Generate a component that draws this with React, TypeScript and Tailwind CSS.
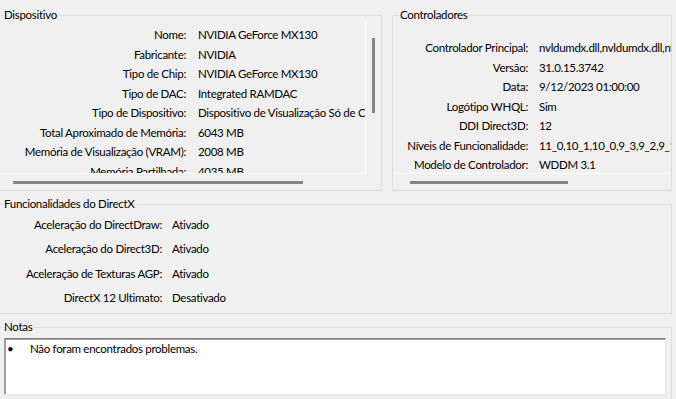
const dispositivo = [
  ['Nome:', 'NVIDIA GeForce MX130'],
  ['Fabricante:', 'NVIDIA'],
  ['Tipo de Chip:', 'NVIDIA GeForce MX130'],
  ['Tipo de DAC:', 'Integrated RAMDAC'],
  ['Tipo de Dispositivo:', 'Dispositivo de Visualização Só de Composição'],
  ['Total Aproximado de Memória:', '6043 MB'],
  ['Memória de Visualização (VRAM):', '2008 MB'],
  ['Memória Partilhada:', '4035 MB'],
]

const controladores = [
  ['Controlador Principal:', 'nvldumdx.dll,nvldumdx.dll,nvldumdx.dll,nvldumdx.dll'],
  ['Versão:', '31.0.15.3742'],
  ['Data:', '9/12/2023 01:00:00'],
  ['Logótipo WHQL:', 'Sim'],
  ['DDI Direct3D:', '12'],
  ['Níveis de Funcionalidade:', '11_0,10_1,10_0,9_3,9_2,9_1'],
  ['Modelo de Controlador:', 'WDDM 3.1'],
]

const funcionalidades = [
  ['Aceleração do DirectDraw:', 'Ativado'],
  ['Aceleração do Direct3D:', 'Ativado'],
  ['Aceleração de Texturas AGP:', 'Ativado'],
  ['DirectX 12 Ultimato:', 'Desativado'],
]

function Title({ text, className }: { text: string; className: string }) {
  return (
    <span
      className={`absolute -top-[9px] bg-[#f0f0f0] px-px leading-4 whitespace-nowrap ${className}`}
    >
      {text}
    </span>
  )
}

export default function App() {
  return (
    <div
      className="w-[676px] h-[399px] overflow-hidden bg-[#f0f0f0] text-[11.5px] tracking-[-0.3px] text-black"
      style={{ fontFamily: 'Lato, "Noto Sans", sans-serif' }}
    >
      <div className="flex pt-[15px]">
        {/* Dispositivo */}
        <div className="relative -ml-px w-[383px] h-[176px] border border-[#dcdcdc]">
          <Title text="Dispositivo" className="left-[3px]" />
          <div className="flex mt-[4px]">
            <div className="w-[366px] h-[154px] overflow-hidden border-r border-b border-white pt-[5px]">
              {dispositivo.map(([label, value]) => (
                <div key={label} className="flex items-center h-[19.5px] whitespace-nowrap">
                  <span className="w-[186px] shrink-0 text-right">{label}</span>
                  <span className="ml-[12px]">{value}</span>
                </div>
              ))}
            </div>
            <div className="ml-[6px] mt-[18px] w-[3px] h-[75px] bg-[#858585]" />
          </div>
          <div className="mt-[7px] ml-[13px] w-[290px] h-[3px] bg-[#858585]" />
        </div>

        {/* Controladores */}
        <div className="relative ml-[10px] w-[280px] h-[176px] border border-[#dcdcdc]">
          <Title text="Controladores" className="left-[6px]" />
          <div className="mt-[4px] h-[154px] overflow-hidden border-b border-white pt-[18px]">
            {controladores.map(([label, value]) => (
              <div key={label} className="flex items-center h-[19.5px] whitespace-nowrap">
                <span className="w-[135px] shrink-0 text-right">{label}</span>
                <span className="ml-[11px]">{value}</span>
              </div>
            ))}
          </div>
          <div className="mt-[7px] ml-[17px] w-[158px] h-[3px] bg-[#858585]" />
        </div>
      </div>

      {/* Funcionalidades do DirectX */}
      <div className="relative mt-[13px] -ml-px w-[673px] h-[110px] border border-[#dcdcdc] pt-[7px]">
        <Title text="Funcionalidades do DirectX" className="left-[3px]" />
        {funcionalidades.map(([label, value]) => (
          <div key={label} className="flex items-center h-[24.5px] whitespace-nowrap">
            <span className="w-[162px] shrink-0 text-right">{label}</span>
            <span className="ml-[10px]">{value}</span>
          </div>
        ))}
      </div>

      {/* Notas */}
      <div className="relative mt-[13px] -ml-px w-[673px] h-[100px] border border-b-0 border-[#dcdcdc]">
        <Title text="Notas" className="left-[3px]" />
        <div className="mt-[10px] ml-[4px] w-[662px] h-[57px] bg-white border border-t-[#828282] border-l-[#a0a0a0] border-r-[#e3e3e3] border-b-[#e3e3e3] shadow-[inset_1px_1px_0_#a0a0a0] pt-[2px] pl-[2px]">
          <div className="flex leading-4">
            <span className="w-[23px]">•</span>
            <span>Não foram encontrados problemas.</span>
          </div>
        </div>
      </div>
    </div>
  )
}
